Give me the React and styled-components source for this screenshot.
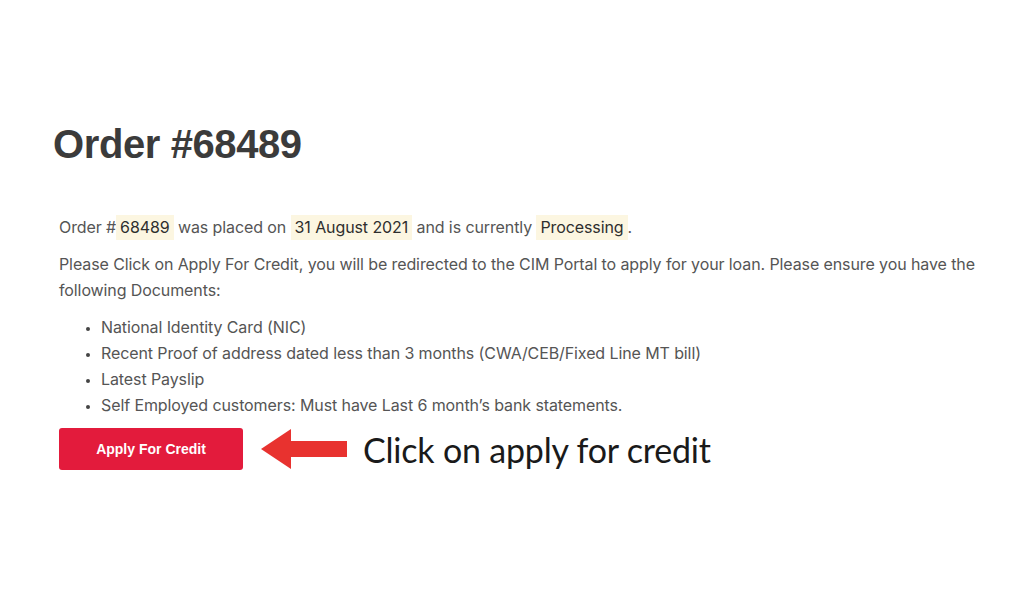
import React from "react";
import styled, { createGlobalStyle } from "styled-components";

const GlobalStyle = createGlobalStyle`
  html, body {
    margin: 0;
    padding: 0;
    background: #fff;
  }
  body {
    font-family: Inter, "Liberation Sans", sans-serif;
    -webkit-font-smoothing: antialiased;
  }
`;

// 문서 목록
const docs = [
  "National Identity Card (NIC)",
  "Recent Proof of address dated less than 3 months (CWA/CEB/Fixed Line MT bill)",
  "Latest Payslip",
  "Self Employed customers: Must have Last 6 month\u2019s bank statements.",
];

const Page = styled.div`
  width: 1024px;
  height: 614px;
  box-sizing: border-box;
  padding: 118px 0 0 59px;
  background: #fff;
`;

const Title = styled.h1`
  margin: 0 0 0 -6px;
  font-family: "Liberation Sans", Arial, sans-serif;
  font-weight: 700;
  font-size: 40px;
  line-height: 52px;
  letter-spacing: -0.4px;
  color: #3b3b3b;
`;

const Text = styled.p`
  margin: ${(p) => p.top || 0}px 0 0;
  font-size: 16px;
  line-height: 26px;
  color: #555;
  letter-spacing: -0.1px;
`;

const Mark = styled.mark`
  background: #fcf6e1;
  color: #2e2e2e;
  padding: 2px 4px 3px;
`;

const List = styled.ul`
  margin: 11px 0 0;
  padding-left: 42px;
  font-size: 16px;
  line-height: 26px;
  color: #555;
  letter-spacing: -0.1px;
`;

const Item = styled.li`
  &::marker {
    color: #444;
    font-size: 12px;
  }
`;

const ActionRow = styled.div`
  display: flex;
  align-items: center;
  margin-top: 10px;
`;

const CreditButton = styled.button`
  width: 184px;
  height: 42px;
  border: none;
  border-radius: 3px;
  background: #e31b3c;
  color: #fff;
  font-family: "Liberation Sans", Arial, sans-serif;
  font-weight: 700;
  font-size: 14px;
  cursor: pointer;
`;

const Arrow = styled.svg`
  margin-left: 18px;
  flex-shrink: 0;
`;

const Hint = styled.span`
  margin-left: 16px;
  font-family: Lato, "Noto Sans", sans-serif;
  font-size: 34px;
  color: #1a1a1a;
  letter-spacing: -0.2px;
`;

const App = () => {
  return (
    <>
      <GlobalStyle />
      <Page>
        <Title>Order #68489</Title>
        <Text top={44}>
          Order #<Mark>68489</Mark> was placed on <Mark>31 August 2021</Mark> and is
          currently <Mark>Processing</Mark>.
        </Text>
        <Text top={11}>
          Please Click on Apply For Credit, you will be redirected to the CIM Portal to
          apply for your loan. Please ensure you have the
          <br />
          following Documents:
        </Text>
        <List>
          {docs.map((d, i) => (
            <Item key={i}>{d}</Item>
          ))}
        </List>
        <ActionRow>
          <CreditButton>Apply For Credit</CreditButton>
          <Arrow width="86" height="42" viewBox="0 0 86 42">
            <polygon
              points="0,21 30,1 30,13 86,13 86,29 30,29 30,41"
              fill="#e8322f"
            />
          </Arrow>
          <Hint>Click on apply for credit</Hint>
        </ActionRow>
      </Page>
    </>
  );
};

export default App;
